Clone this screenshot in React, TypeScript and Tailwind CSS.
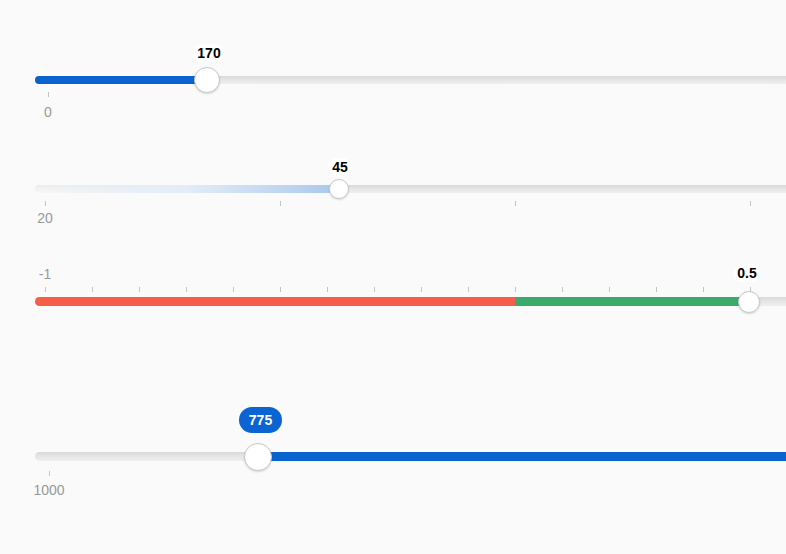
import React from "react";

const font = { fontFamily: '"Liberation Sans", Arial, sans-serif' };

function Tick({ x, top }: { x: number; top: number }) {
  return <div className="absolute w-px h-[5px] bg-[#c4c4c4]" style={{ left: x, top }} />;
}

function Grid({ x, top, text }: { x: number; top: number; text: string }) {
  return (
    <div
      className="absolute -translate-x-1/2 text-[14px] leading-[16px] text-[#999]"
      style={{ left: x, top }}
    >
      {text}
    </div>
  );
}

function Bubble({ x, top, text }: { x: number; top: number; text: string }) {
  return (
    <div
      className="absolute -translate-x-1/2 rounded-full bg-white px-[4px] text-[14px] leading-[18px] font-bold text-black"
      style={{ left: x, top }}
    >
      {text}
    </div>
  );
}

function Handle({ cx, cy, d }: { cx: number; cy: number; d: number }) {
  return (
    <div
      className="absolute rounded-full bg-white border border-[#c9c9c9] shadow-[0_1px_2px_rgba(0,0,0,0.15)]"
      style={{ left: cx - d / 2, top: cy - d / 2, width: d, height: d }}
    />
  );
}

const trackBg = "bg-gradient-to-b from-[#d9d9d9] via-[#e6e6e6] to-[#efefef]";

export default function App() {
  const ticks3 = Array.from({ length: 16 }, (_, i) => 45 + i * 47);
  return (
    <div className="w-[786px] h-[554px] bg-[#fafafa] overflow-hidden flex flex-col" style={font}>
      {/* Slider 1 */}
      <div className="relative h-[140px] pt-[76px] pl-[35px]">
        <div className={`w-[800px] h-[8px] rounded-l-full ${trackBg} flex`}>
          <div className="w-[172px] h-full rounded-l-full bg-[#0a62cf]" />
        </div>
        <Tick x={48} top={92} />
        <Grid x={48} top={104} text="0" />
        <Bubble x={209} top={44} text="170" />
        <Handle cx={207} cy={80} d={26} />
      </div>

      {/* Slider 2 */}
      <div className="relative h-[110px] pt-[45px] pl-[35px]">
        <div className={`w-[800px] h-[8px] rounded-l-full ${trackBg} flex`}>
          <div className="w-[304px] h-full rounded-l-full bg-gradient-to-r from-[rgba(255,255,255,0.5)] via-[#e3ecf7] to-[#a9c8ec]" />
        </div>
        {[45, 280, 515, 750].map((x) => (
          <Tick key={x} x={x} top={61} />
        ))}
        <Grid x={45} top={70} text="20" />
        <Bubble x={340} top={18} text="45" />
        <Handle cx={339} cy={49} d={20} />
      </div>

      {/* Slider 3 */}
      <div className="relative h-[90px] pt-[47px] pl-[35px]">
        <div className={`w-[800px] h-[9px] rounded-l-full ${trackBg} flex`}>
          <div className="w-[480px] h-full rounded-l-full bg-[#f65e47]" />
          <div className="w-[234px] h-full bg-[#3aab6a]" />
        </div>
        <Grid x={45} top={16} text="-1" />
        {ticks3.map((x) => (
          <Tick key={x} x={x} top={37} />
        ))}
        <Bubble x={747} top={14} text="0.5" />
        <Handle cx={749} cy={52} d={22} />
      </div>

      {/* Slider 4 */}
      <div className="relative h-[214px] pt-[112px] pl-[35px]">
        <div className={`w-[800px] h-[9px] rounded-l-full ${trackBg} flex`}>
          <div className="w-[223px] h-full" />
          <div className="flex-1 h-full bg-[#0a62cf]" />
        </div>
        <div className="absolute left-[239px] top-[67px] w-[43px] h-[26px] rounded-full bg-[#0a64d1] flex items-center justify-center text-white font-bold text-[14px]">
          775
        </div>
        <Handle cx={258} cy={117} d={28} />
        <Tick x={49} top={131} />
        <Grid x={49} top={142} text="1000" />
      </div>
    </div>
  );
}
